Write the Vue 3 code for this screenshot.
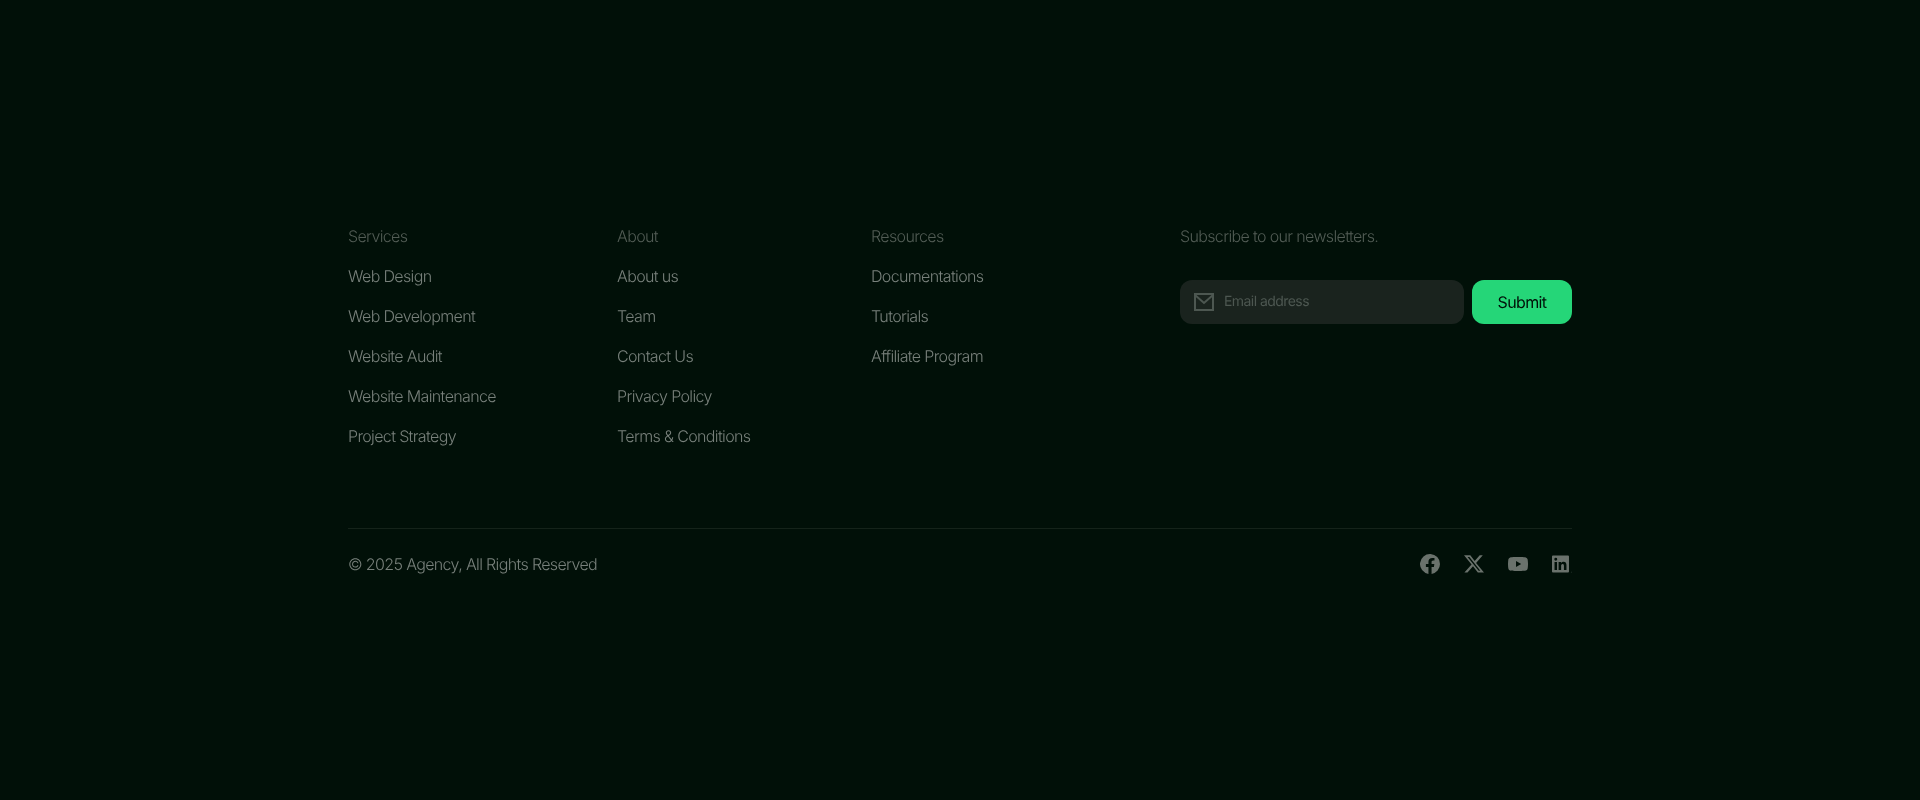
<template>
  <footer class="footer">
    <div class="footer__inner">
      <div class="footer__top">
        <div v-for="col in columns" :key="col.title" class="col">
          <h4 class="col__title">{{ col.title }}</h4>
          <a v-for="link in col.links" :key="link" class="col__link" href="#">{{ link }}</a>
        </div>

        <div class="subscribe">
          <p class="col__title">Subscribe to our newsletters.</p>
          <form class="subscribe__form" @submit.prevent>
            <label class="subscribe__field">
              <svg class="subscribe__icon" viewBox="0 0 20 18" width="20" height="18" fill="none" stroke="currentColor" stroke-width="2">
                <rect x="1" y="1" width="18" height="16" />
                <path d="M1 2l9 8 9-8" />
              </svg>
              <input class="subscribe__input" type="email" placeholder="Email address" />
            </label>
            <button class="subscribe__btn" type="submit">Submit</button>
          </form>
        </div>
      </div>

      <div class="footer__bottom">
        <span class="copy">© 2025 Agency, All Rights Reserved</span>
        <div class="social">
          <svg viewBox="2 2 20 20" width="20" height="20" fill="currentColor">
            <path d="M22 12a10 10 0 1 0-11.56 9.88v-6.99H7.9V12h2.54V9.8c0-2.51 1.49-3.89 3.78-3.89 1.09 0 2.24.2 2.24.2v2.46h-1.26c-1.24 0-1.63.77-1.63 1.56V12h2.78l-.44 2.89h-2.34v6.99A10 10 0 0 0 22 12z" />
          </svg>
          <svg viewBox="1.1 1.6 20.9 20.9" width="20" height="20" fill="currentColor">
            <path d="M17.53 3h3.2l-7 7.98L22 21h-6.44l-5.05-6.6L4.73 21H1.52l7.48-8.55L1.1 3h6.6l4.56 6.03L17.53 3zm-1.12 16.2h1.77L6.73 4.7H4.83l11.58 14.5z" />
          </svg>
          <svg viewBox="2 2 20 20" width="20" height="20" fill="currentColor">
            <path d="M21.6 7.2a2.5 2.5 0 0 0-1.76-1.77C18.25 5 12 5 12 5s-6.25 0-7.84.43A2.5 2.5 0 0 0 2.4 7.2 26 26 0 0 0 2 12a26 26 0 0 0 .4 4.8 2.5 2.5 0 0 0 1.76 1.77C5.75 19 12 19 12 19s6.25 0 7.84-.43a2.5 2.5 0 0 0 1.76-1.77A26 26 0 0 0 22 12a26 26 0 0 0-.4-4.8zM10 15V9l5.2 3-5.2 3z" />
          </svg>
          <svg viewBox="3 1.4 21.2 21.2" width="20" height="20" fill="currentColor">
            <path d="M20 3H4a1 1 0 0 0-1 1v16a1 1 0 0 0 1 1h16a1 1 0 0 0 1-1V4a1 1 0 0 0-1-1zM8.34 18.34H5.67V9.75h2.67v8.59zM7 8.58a1.55 1.55 0 1 1 0-3.1 1.55 1.55 0 0 1 0 3.1zm11.34 9.76h-2.67v-4.18c0-1 0-2.28-1.39-2.28s-1.6 1.09-1.6 2.21v4.25H10V9.75h2.56v1.17h.04a2.8 2.8 0 0 1 2.53-1.39c2.7 0 3.2 1.78 3.2 4.1v4.71z" />
            <circle cx="23.4" cy="20.6" r=".4" />
          </svg>
        </div>
      </div>
    </div>
  </footer>
</template>

<script setup>
const columns = [
  {
    title: 'Services',
    links: ['Web Design', 'Web Development', 'Website Audit', 'Website Maintenance', 'Project Strategy'],
  },
  {
    title: 'About',
    links: ['About us', 'Team', 'Contact Us', 'Privacy Policy', 'Terms & Conditions'],
  },
  {
    title: 'Resources',
    links: ['Documentations', 'Tutorials', 'Affiliate Program'],
  },
]
</script>

<style>
html, body {
  margin: 0;
  background: #011008;
}
</style>

<style scoped>
.footer {
  height: 800px;
  box-sizing: border-box;
  padding-top: 224px;
  background: #011008;
  font-family: Inter, "Liberation Sans", sans-serif;
  font-weight: 300;
  font-size: 16px;
  line-height: 24px;
  letter-spacing: -0.04em;
  text-rendering: geometricPrecision;
}
.footer__inner {
  width: 1224px;
  margin: 0 auto;
  will-change: opacity;
}

.footer__top {
  display: grid;
  grid-template-columns: 269px 254px 309px 392px;
  padding-bottom: 80px;
  border-bottom: 1px solid #15231a;
}

.col {
  display: flex;
  flex-direction: column;
  align-items: flex-start;
  gap: 16px;
}
.col__title {
  margin: 0;
  font-size: 16px;
  font-weight: 300;
  line-height: 24px;
  color: #525c55;
}
.col__link {
  color: #78807b;
  text-decoration: none;
}

.subscribe__form {
  display: flex;
  gap: 8px;
  margin-top: 32px;
}
.subscribe__field {
  display: flex;
  align-items: center;
  gap: 10px;
  width: 284px;
  height: 44px;
  box-sizing: border-box;
  padding: 0 14px;
  border-radius: 12px;
  background: #1a231e;
}
.subscribe__icon {
  flex: none;
  color: #4d5751;
}
.subscribe__input {
  flex: 1;
  min-width: 0;
  padding: 0;
  border: 0;
  outline: 0;
  background: transparent;
  font: 400 14px/20px Inter, "Liberation Sans", sans-serif;
  letter-spacing: -0.04em;
  text-rendering: geometricPrecision;
  color: #78807b;
}
.subscribe__input::placeholder {
  color: #4d5751;
  opacity: 1;
}
.subscribe__btn {
  width: 100px;
  height: 44px;
  padding: 0;
  border: 0;
  border-radius: 12px;
  background: #25d678;
  font: 400 16px/24px Inter, "Liberation Sans", sans-serif;
  letter-spacing: -0.04em;
  text-rendering: geometricPrecision;
  color: #011008;
}

.footer__bottom {
  display: flex;
  justify-content: space-between;
  align-items: center;
  padding-top: 23px;
}
.copy {
  color: #78807b;
}
.social {
  display: flex;
  gap: 24px;
  color: #6a726c;
}
.social svg {
  display: block;
}
</style>
